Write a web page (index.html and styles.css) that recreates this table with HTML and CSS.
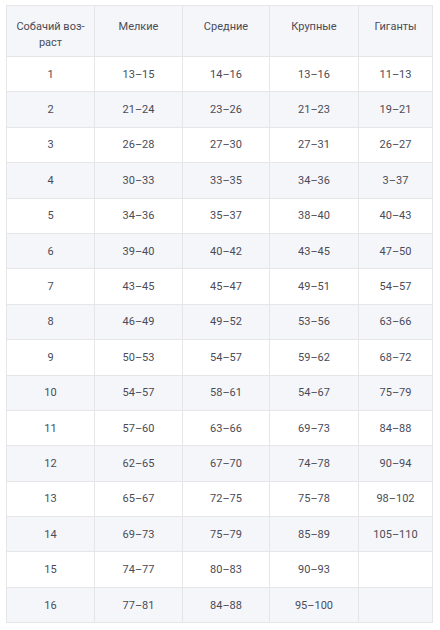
FILE: index.html
```html
<!DOCTYPE html>
<html lang="ru">
<head>
<meta charset="utf-8">
<link rel="stylesheet" href="styles.css">
</head>
<body>
<table class="age-table">
  <colgroup>
    <col class="c1"><col class="c2"><col class="c3"><col class="c4"><col class="c5">
  </colgroup>
  <thead>
    <tr>
      <th>Собачий воз-<br>раст</th>
      <th>Мелкие</th>
      <th>Средние</th>
      <th>Крупные</th>
      <th>Гиганты</th>
    </tr>
  </thead>
  <tbody>
    <tr><td>1</td><td>13–15</td><td>14–16</td><td>13–16</td><td>11–13</td></tr>
    <tr><td>2</td><td>21–24</td><td>23–26</td><td>21–23</td><td>19–21</td></tr>
    <tr><td>3</td><td>26–28</td><td>27–30</td><td>27–31</td><td>26–27</td></tr>
    <tr><td>4</td><td>30–33</td><td>33–35</td><td>34–36</td><td>3–37</td></tr>
    <tr><td>5</td><td>34–36</td><td>35–37</td><td>38–40</td><td>40–43</td></tr>
    <tr><td>6</td><td>39–40</td><td>40–42</td><td>43–45</td><td>47–50</td></tr>
    <tr><td>7</td><td>43–45</td><td>45–47</td><td>49–51</td><td>54–57</td></tr>
    <tr><td>8</td><td>46–49</td><td>49–52</td><td>53–56</td><td>63–66</td></tr>
    <tr><td>9</td><td>50–53</td><td>54–57</td><td>59–62</td><td>68–72</td></tr>
    <tr><td>10</td><td>54–57</td><td>58–61</td><td>54–67</td><td>75–79</td></tr>
    <tr><td>11</td><td>57–60</td><td>63–66</td><td>69–73</td><td>84–88</td></tr>
    <tr><td>12</td><td>62–65</td><td>67–70</td><td>74–78</td><td>90–94</td></tr>
    <tr><td>13</td><td>65–67</td><td>72–75</td><td>75–78</td><td>98–102</td></tr>
    <tr><td>14</td><td>69–73</td><td>75–79</td><td>85–89</td><td>105–110</td></tr>
    <tr><td>15</td><td>74–77</td><td>80–83</td><td>90–93</td><td></td></tr>
    <tr><td>16</td><td>77–81</td><td>84–88</td><td>95–100</td><td></td></tr>
  </tbody>
</table>
</body>
</html>
```
FILE: styles.css
```css
html, body {
  margin: 0;
  padding: 0;
  background: #ffffff;
}
body {
  padding: 5px 8px 0 6px;
  font-family: Roboto, "Noto Sans", sans-serif;
  font-size: 11px;
  color: #4a4b57;
}
.age-table {
  border-collapse: collapse;
  table-layout: fixed;
  width: 426px;
}
.c1 { width: 88px; }
.c2 { width: 88px; }
.c3 { width: 87px; }
.c4 { width: 89px; }
.c5 { width: 74px; }
.age-table th,
.age-table td {
  border: 1px solid #e6e6e9;
  text-align: center;
  padding: 0 6px;
}
.age-table th {
  font-weight: 400;
  vertical-align: top;
  line-height: 16px;
  padding-top: 13px;
  height: 51px;
  box-sizing: border-box;
  background: #f5f6fa;
}
.age-table td {
  height: 35.4px;
  box-sizing: border-box;
  vertical-align: middle;
}
.age-table tbody tr:nth-child(even) td {
  background: #f5f6fa;
}
```
